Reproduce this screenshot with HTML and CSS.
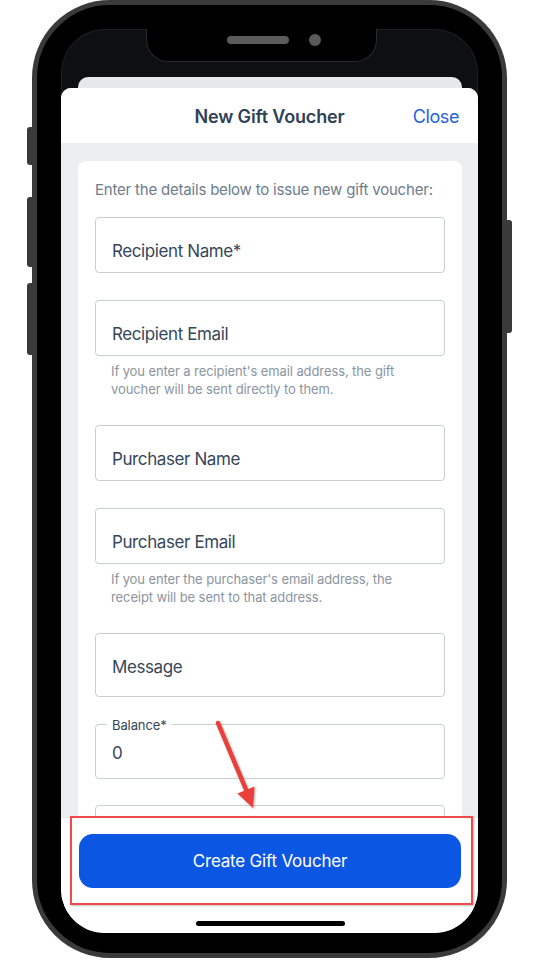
FILE: index.html
```html
<!DOCTYPE html>
<html>
<head>
<meta charset="utf-8">
<link rel="stylesheet" href="styles.css">
</head>
<body>
<div class="page">
  <div class="phone">
    <span class="btn btn-l1"></span>
    <span class="btn btn-l2"></span>
    <span class="btn btn-l3"></span>
    <span class="btn btn-r1"></span>
    <div class="screen">
      <div class="notch"><span class="speaker"></span><span class="camera"></span></div>
      <div class="status"></div>
      <div class="backcard"></div>
      <div class="sheet">
        <div class="header">
          <div class="title">New Gift Voucher</div>
          <div class="close">Close</div>
        </div>
        <div class="content">
          <div class="card">
            <p class="intro">Enter the details below to issue new gift voucher:</p>
            <div class="field"><div class="input">Recipient Name*</div></div>
            <div class="field">
              <div class="input">Recipient Email</div>
              <p class="help">If you enter a recipient's email address, the gift voucher will be sent directly to them.</p>
            </div>
            <div class="field"><div class="input">Purchaser Name</div></div>
            <div class="field">
              <div class="input">Purchaser Email</div>
              <p class="help">If you enter the purchaser's email address, the receipt will be sent to that address.</p>
            </div>
            <div class="field"><div class="input input-msg">Message</div></div>
            <div class="field">
              <div class="input input-filled"><span class="float">Balance*</span>0</div>
            </div>
            <div class="field"><div class="input"></div></div>
          </div>
        </div>
        <div class="footer">
          <div class="cta">Create Gift Voucher</div>
          <div class="home"></div>
        </div>
      </div>
    </div>
  </div>
  <div class="annot-box"></div>
  <svg class="annot-arrow" width="540" height="960" viewBox="0 0 540 960">
    <defs>
      <filter id="sh" x="-20%" y="-20%" width="140%" height="140%">
        <feDropShadow dx="1" dy="1" stdDeviation="1" flood-color="#000" flood-opacity="0.35"/>
      </filter>
    </defs>
    <g filter="url(#sh)">
      <line x1="218" y1="723" x2="247" y2="792" stroke="#ea3f3a" stroke-width="4.5" stroke-linecap="round"/>
      <polygon points="253,808 237.5,793.5 254.5,786.5" fill="#ea3f3a"/>
    </g>
  </svg>
</div>
</body>
</html>
```

FILE: styles.css
```css
* { box-sizing: border-box; }
html, body { margin: 0; padding: 0; background: #ffffff; }
body { font-family: Inter, "Liberation Sans", Arial, sans-serif; }
.page { position: relative; width: 540px; height: 960px; overflow: hidden; }

.phone {
  position: relative;
  margin-left: 32px;
  width: 475px;
  height: 958px;
  border: 5px solid #3a3a3a;
  border-radius: 78px;
  background: #000;
  padding: 24px 24px 20px 24px;
}
.btn { position: absolute; width: 6px; background: #3a3a3a; border-radius: 3px 0 0 3px; }
.btn-l1 { left: -10px; top: 122px; height: 38px; }
.btn-l2 { left: -10px; top: 192px; height: 70px; }
.btn-l3 { left: -10px; top: 278px; height: 72px; }
.btn-r1 { right: -10px; top: 215px; height: 113px; border-radius: 0 3px 3px 0; }

.screen {
  position: relative;
  width: 417px;
  height: 904px;
  border-radius: 44px;
  overflow: hidden;
  background: #0e0f11;
  display: flex;
  flex-direction: column;
  box-shadow: inset 0 0 0 1px #1e1f22;
}
.notch {
  position: absolute;
  left: 85px;
  top: -2px;
  width: 231px;
  height: 35px;
  background: #000;
  border: 1px solid #2a2b2e;
  border-top: none;
  border-radius: 0 0 22px 22px;
  display: flex;
  align-items: center;
  justify-content: center;
  gap: 20px;
  padding: 0 0 9px 25px;
}
.speaker { width: 62px; height: 8px; border-radius: 4px; background: #5c5c5c; }
.camera { width: 12px; height: 12px; border-radius: 50%; background: #5a5a5a; }
.status { height: 48px; flex: none; }
.backcard {
  flex: none;
  height: 11px;
  margin: 0 16px 0 17px;
  background: #e6e8e9;
  border-radius: 10px 10px 0 0;
}
.sheet {
  flex: 1;
  display: flex;
  flex-direction: column;
  background: #eceff0;
  border-radius: 10px 10px 0 0;
  overflow: hidden;
  min-height: 0;
}
.header {
  flex: none;
  height: 55px;
  background: #fff;
  position: relative;
  display: flex;
  align-items: center;
  justify-content: center;
  padding-top: 2px;
}
.title { font-size: 18px; font-weight: 600; color: #2f4154; letter-spacing: -0.15px; }
.close { position: absolute; right: 19px; top: 1px; line-height: 55px; font-size: 18px; color: #1f62e0; letter-spacing: -0.4px; }

.content { flex: 1; min-height: 0; overflow: hidden; padding: 18px 16px 0 17px; }
.card {
  background: #fff;
  border-radius: 8px;
  padding: 19px 17px 0 17px;
  display: flex;
  flex-direction: column;
  gap: 26.5px;
}
.intro { margin: 0 0 -9.5px 0; font-size: 15px; line-height: 20px; color: #6d7c8c; letter-spacing: -0.2px; }
.field { display: flex; flex-direction: column; }
.input {
  position: relative;
  height: 56px;
  border: 1px solid #c9ced3;
  border-radius: 4px;
  padding: 22px 16px 0 16px;
  font-size: 17px;
  line-height: 22px;
  color: #35475a;
  letter-spacing: -0.4px;
}
.input-msg { height: 64px; }
.input-filled { height: 55px; padding-top: 17px; }
.float {
  position: absolute;
  left: 11px;
  top: -8px;
  padding: 0 5px;
  background: #fff;
  font-size: 13px;
  line-height: 17px;
  color: #35475a;
  letter-spacing: -0.1px;
}
.help { margin: 6px 0 0 0; padding: 0 16px; font-size: 13px; line-height: 18.5px; color: #8a95a0; letter-spacing: -0.1px; }

.footer {
  flex: none;
  height: 116px;
  background: #fff;
  border-top: 1px solid #e3e6e8;
  padding: 16px 17px 0 18px;
  display: flex;
  flex-direction: column;
  align-items: center;
}
.cta {
  width: 100%;
  height: 54px;
  border-radius: 14px;
  background: #0b57e4;
  color: #fff;
  font-size: 17px;
  letter-spacing: -0.2px;
  display: flex;
  align-items: center;
  justify-content: center;
}
.home { margin-top: 33px; width: 149px; height: 5px; border-radius: 3px; background: #000; }

.annot-box {
  position: absolute;
  left: 70px;
  top: 816px;
  width: 403px;
  height: 89px;
  border: 2px solid #f04a4a;
  box-shadow: 1px 1px 2px rgba(0,0,0,0.25);
}
.annot-arrow { position: absolute; left: 0; top: 0; pointer-events: none; }
```
